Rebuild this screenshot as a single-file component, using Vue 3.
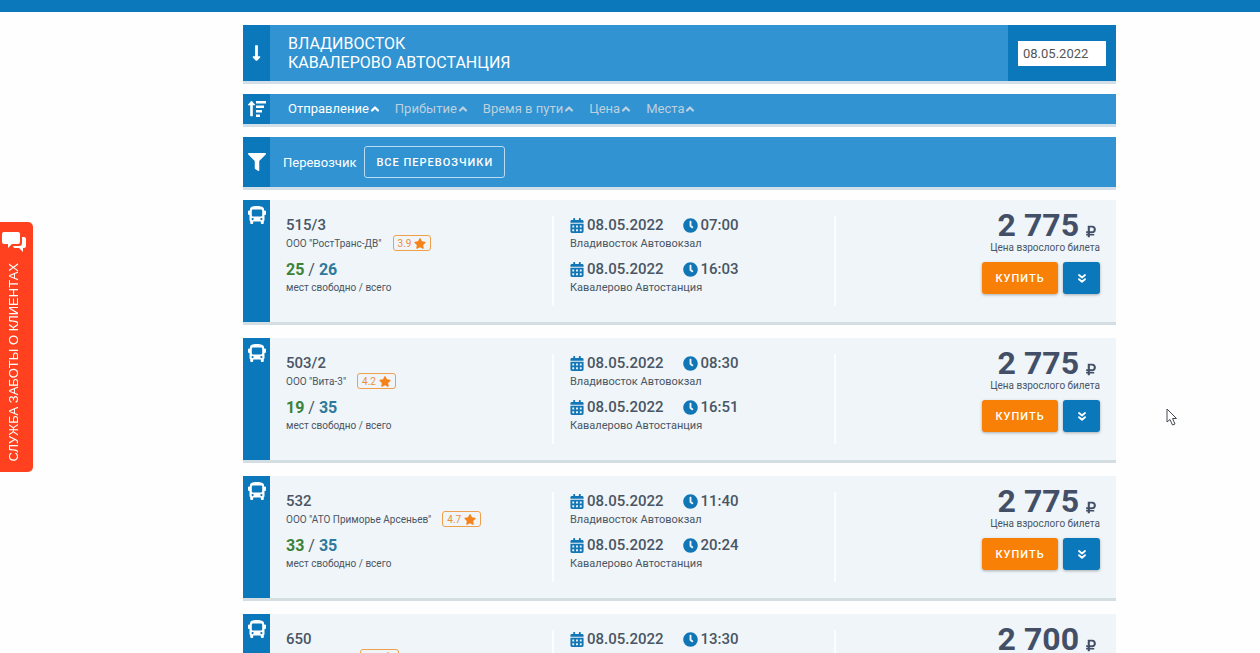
<script setup>
import { ref } from 'vue'

const date = ref('08.05.2022')
const sorts = ['Отправление', 'Прибытие', 'Время в пути', 'Цена', 'Места']
const active = ref('Отправление')

const trips = [
  { no: '515/3', company: 'ООО "РостТранс-ДВ"', rate: '3.9', free: 25, total: 26, dep: '07:00', arr: '16:03', price: '2 775' },
  { no: '503/2', company: 'ООО "Вита-3"', rate: '4.2', free: 19, total: 35, dep: '08:30', arr: '16:51', price: '2 775' },
  { no: '532', company: 'ООО "АТО Приморье Арсеньев"', rate: '4.7', free: 33, total: 35, dep: '11:40', arr: '20:24', price: '2 775' },
  { no: '650', company: 'ООО "Вокзал"', rate: '4.5', free: 30, total: 35, dep: '13:30', arr: '22:10', price: '2 700' },
]
const stops = (t) => [
  { time: t.dep, place: 'Владивосток Автовокзал' },
  { time: t.arr, place: 'Кавалерово Автостанция' },
]
</script>

<template>
  <div class="page">
    <svg class="defs" aria-hidden="true">
      <symbol id="i-cal" viewBox="0 0 448 512">
        <path d="M0 464c0 26.500 21.500 48 48 48h352c26.500 0 48-21.500 48-48V192H0v272zm320-208h64v64h-64zm0 128h64v64h-64zM192 256h64v64h-64zm0 128h64v64h-64zM64 256h64v64H64zm0 128h64v64H64zM400 64h-48V16c0-9-7-16-16-16h-32c-9 0-16 7-16 16v48H160V16c0-9-7-16-16-16h-32c-9 0-16 7-16 16v48H48C21 64 0 85 0 112v48h448v-48c0-27-21-48-48-48z" fill-rule="evenodd" />
      </symbol>
      <symbol id="i-clock" viewBox="0 0 512 512">
        <path d="M256,8C119,8,8,119,8,256S119,504,256,504,504,393,504,256,393,8,256,8Zm92.490,313h0l-20,25a16,16,0,0,1-22.490,2.500h0l-67-49.720a40,40,0,0,1-15-31.230V112a16,16,0,0,1,16-16h32a16,16,0,0,1,16,16V256l58,42.500A16,16,0,0,1,348.490,321Z" />
      </symbol>
      <symbol id="i-star" viewBox="0 0 576 512">
        <path d="M259.300 17.800L194 150.200 47.900 171.500c-26.200 3.800-36.700 36.100-17.700 54.600l105.700 103-25 145.500c-4.500 26.300 23.200 46 46.400 33.700L288 439.600l130.700 68.700c23.200 12.200 50.900-7.400 46.400-33.700l-25-145.500 105.700-103c19-18.500 8.500-50.800-17.700-54.600L382 150.200 316.700 17.800c-11.700-23.600-45.600-23.900-57.400 0z" />
      </symbol>
      <symbol id="i-rub" viewBox="0 0 384 512">
        <path fill-rule="evenodd" d="M239 320C324 320 384 260 384 175S324 32 239 32H76c-7 0-12 5-12 12v207H12c-7 0-12 5-12 12V308c0 7 5 12 12 12h52v32H12c-7 0-12 5-12 12v40c0 7 5 12 12 12h52v52c0 7 5 12 12 12h59c6 0 12-5 12-12v-52H308c7 0 12-5 12-12v-40c0-7-5-12-12-12H147v-32h92zM147 101h78c47 0 75 29 75 74 0 46-28 76-76 76h-77V101z" />
      </symbol>
      <symbol id="i-bus" viewBox="0 0 18 18">
        <path fill-rule="evenodd" d="M9 0C5 0 2 1 2 3V4.500H1Q0 4.500 0 5.500V8Q0 9 1 9H1.500V14Q1.500 14.800 2.200 15V17Q2.200 18 3.200 18H4.200Q5.200 18 5.200 17V15.500H12.800V17Q12.800 18 13.800 18H14.800Q15.800 18 15.800 17V15Q16.500 14.800 16.500 14V9H17Q18 9 18 8V5.500Q18 4.500 17 4.500H16V3C16 1 13 0 9 0ZM5 3.500H13Q14.200 3.500 14.200 4.700V9.300Q14.200 10.500 13 10.500H5Q3.800 10.500 3.800 9.300V4.700Q3.800 3.500 5 3.500ZM4.600 12A1.100 1.100 0 1 1 4.600 14.200A1.100 1.100 0 1 1 4.600 12ZM13.400 12A1.100 1.100 0 1 1 13.400 14.200A1.100 1.100 0 1 1 13.400 12Z" />
      </symbol>
      <symbol id="i-up" viewBox="0 0 10 8">
        <path d="M2 5.500L5 2.500L8 5.500" fill="none" stroke="currentColor" stroke-width="2.200" stroke-linecap="round" stroke-linejoin="round" />
      </symbol>
    </svg>

    <div class="topbar"></div>

    <aside class="care">
      <svg width="24" height="22" viewBox="0 0 24 22" aria-hidden="true">
        <path d="M2 1H16Q18 1 18 3V11Q18 13 16 13H10L6 17V13H2Q0 13 0 11V3Q0 1 2 1Z" />
        <path d="M20 6H22Q24 6 24 8V15Q24 17 22 17H21V21L17 17H13Q11 17 11 15H17Q20 15 20 12Z" />
      </svg>
      <a href="#">СЛУЖБА ЗАБОТЫ О КЛИЕНТАХ</a>
    </aside>

    <main class="content">
      <header class="bar route">
        <div class="tab">
          <svg width="9" height="18" viewBox="0 0 256 512" aria-hidden="true"><path d="M168 346V44c0-7-5-12-12-12h-56c-7 0-12 5-12 12v302H42c-21 0-32 26-17 41l86 86c9 9 25 9 34 0l86-86c15-15 4-41-17-41H168z" /></svg>
        </div>
        <h1>ВЛАДИВОСТОК<br />КАВАЛЕРОВО АВТОСТАНЦИЯ</h1>
        <div class="datebox"><input v-model="date" type="text" aria-label="Дата" /></div>
      </header>

      <nav class="bar sort">
        <div class="tab">
          <svg width="18" height="16" viewBox="0 0 18 16" aria-hidden="true">
            <path d="M3.500 0L7 4H4.500V15H2.500V4H0Z" stroke="#fff" stroke-linejoin="round" stroke-width=".6" />
            <path d="M8 0H18V2.500H8ZM8 4.500H16V7H8ZM8 9H14V11.500H8ZM8 13.500H12V16H8Z" />
          </svg>
        </div>
        <div class="sorts">
          <button v-for="s in sorts" :key="s" type="button" :class="{ active: s === active }" @click="active = s">
            {{ s }}<svg width="10" height="8" aria-hidden="true"><use href="#i-up" /></svg>
          </button>
        </div>
      </nav>

      <section class="bar filter">
        <div class="tab">
          <svg width="18" height="18" viewBox="0 0 512 512" aria-hidden="true"><path d="M488 0H24C3 0-8 26 7 41L192 226V432c0 8 4 15 10 20l80 56C298 519 320 507 320 488V226l185-185C520 26 509 0 488 0z" /></svg>
        </div>
        <span id="carrier">Перевозчик</span>
        <button type="button" class="all" aria-describedby="carrier">ВСЕ ПЕРЕВОЗЧИКИ</button>
      </section>

      <article v-for="t in trips" :key="t.no" class="card">
        <div class="tab">
          <svg width="18" height="18" aria-hidden="true"><use href="#i-bus" /></svg>
        </div>
        <div class="cols">
          <div class="col">
            <h2>{{ t.no }}</h2>
            <div class="company">
              {{ t.company }}
              <span class="rate">{{ t.rate }}<svg width="12" height="11" aria-hidden="true"><use href="#i-star" /></svg></span>
            </div>
            <div class="seats"><b class="free">{{ t.free }}</b> / <b class="total">{{ t.total }}</b></div>
            <div class="note">мест свободно / всего</div>
          </div>
          <div class="col">
            <div v-for="s in stops(t)" :key="s.place" class="stop">
              <div class="when">
                <svg width="14" height="15" aria-hidden="true"><use href="#i-cal" /></svg>
                <span class="day">{{ date }}</span>
                <svg width="15" height="15" aria-hidden="true"><use href="#i-clock" /></svg>
                <span>{{ s.time }}</span>
              </div>
              <div class="place">{{ s.place }}</div>
            </div>
          </div>
          <div class="col buy">
            <div class="price">{{ t.price }}<svg width="10" height="13" role="img" aria-label="₽"><use href="#i-rub" /></svg></div>
            <div class="hint">Цена взрослого билета</div>
            <div class="actions">
              <button type="button" class="order">КУПИТЬ</button>
              <button type="button" class="more" aria-label="Подробнее">
                <svg width="8" height="9" viewBox="0 0 8 9" aria-hidden="true"><path d="M1 1L4 3.500L7 1M1 5.200L4 7.700L7 5.200" fill="none" stroke="#fff" stroke-width="1.800" stroke-linecap="round" stroke-linejoin="round" /></svg>
              </button>
            </div>
          </div>
        </div>
      </article>
    </main>

    <svg class="pointer" width="12" height="18" viewBox="0 0 12 18" aria-hidden="true">
      <path d="M1 1V14L4 11.500L6.500 17L9 16L6.500 10.500H10.500Z" fill="#fff" stroke="#444a55" />
    </svg>
  </div>
</template>

<style>
body {
  overflow-x: hidden;
  background: #fefefe;
}
</style>

<style scoped>
.page {
  font-family: Roboto, "Liberation Sans", sans-serif;
  color: #4a5565;
  min-height: 100vh;
}
* { box-sizing: border-box; }
button, input { font-family: inherit; margin: 0; }
svg { display: block; fill: currentColor; flex: none; }
.defs { position: absolute; width: 0; height: 0; }
.topbar { height: 12px; background: #0b78bb; }
.content { padding: 13px 144px 0 243px; }

.care {
  position: fixed;
  left: 0;
  top: 222px;
  width: 33px;
  height: 250px;
  padding: 9px 0 11px 2px;
  background: #ff411f;
  border-radius: 0 5px 5px 0;
  color: #fff;
  display: flex;
  flex-direction: column;
  justify-content: space-between;
}
.care a {
  writing-mode: vertical-rl;
  transform: rotate(180deg);
  color: #fff;
  text-decoration: none;
  font: 13px/24px "Liberation Sans", Arial, sans-serif;
  white-space: nowrap;
}

.bar {
  display: flex;
  align-items: center;
  background: #3193d1;
  border-bottom: 3px solid #d3dfe8;
  margin-bottom: 10px;
  color: #fff;
}
.tab {
  flex: none;
  width: 27px;
  align-self: stretch;
  display: flex;
  align-items: center;
  justify-content: center;
  background: #0b78bb;
  color: #fff;
}
.route { height: 59px; }
.route h1 {
  flex: 1;
  margin: 0 0 0 18px;
  font-size: 16px;
  line-height: 19px;
  font-weight: 400;
}
.datebox {
  align-self: stretch;
  display: flex;
  align-items: center;
  padding: 0 10px;
  background: #0b78bb;
}
.datebox input {
  width: 88px;
  height: 25px;
  border: 0;
  padding: 0 5px;
  font-size: 13px;
  color: #555;
  background: #fff;
}
.sort { height: 33px; }
.sorts { display: flex; gap: 15px; padding-left: 18px; }
.sorts button {
  display: flex;
  align-items: center;
  gap: 1px;
  padding: 0;
  border: 0;
  background: none;
  font-size: 13px;
  line-height: 20px;
  color: #bcd0df;
}
.sorts .active { color: #fff; }
.filter { height: 53px; font-size: 13px; padding-right: 16px; }
.filter span { margin: 0 8px 0 13px; }
.all {
  height: 32px;
  padding: 0 11px;
  border: 1px solid #b9dcf2;
  border-radius: 3px;
  background: none;
  color: #fff;
  font-size: 11px;
  font-weight: 500;
  letter-spacing: 1px;
}

.card {
  display: flex;
  min-height: 125px;
  margin-bottom: 13px;
  background: #eff5f8;
  border-bottom: 3px solid #d3dde2;
}
.card .tab { align-items: flex-start; padding-top: 6px; }
.cols {
  flex: 1;
  display: grid;
  grid-template-columns: repeat(3, 1fr);
  padding: 16px 0;
}
.col { padding-left: 16px; }
.col + .col { border-left: 2px solid #fcfdfe; }
h2 { margin: 0; font-size: 15px; line-height: 19px; font-weight: 500; }
.company {
  display: flex;
  align-items: center;
  gap: 11px;
  height: 16px;
  font-size: 10px;
}
.rate {
  display: flex;
  align-items: center;
  gap: 3px;
  height: 16px;
  padding: 0 4px;
  border: 1px solid #f0a04c;
  border-radius: 3px;
  font-size: 10px;
  color: #ec8d3c;
}
.rate svg { color: #f5821a; }
.seats { margin-top: 9px; font-size: 16px; line-height: 19px; }
.seats b { font-weight: 700; }
.free { color: #3d8239; }
.total { color: #2d7a9c; }
.note { font-size: 10px; line-height: 17px; }
.place { font-size: 11px; line-height: 17px; }
.stop { margin-bottom: 8px; }
.when {
  display: flex;
  align-items: center;
  gap: 3px;
  font-size: 15px;
  line-height: 19px;
  font-weight: 500;
}
.when svg { color: #1176b6; }
.day { margin-right: 16px; }
.buy {
  display: flex;
  flex-direction: column;
  align-items: flex-end;
  padding-right: 16px;
}
.price {
  display: flex;
  align-items: flex-end;
  gap: 7px;
  padding-right: 4px;
  margin-top: -8px;
  font-size: 32px;
  line-height: 34px;
  font-weight: 700;
  color: #434f67;
}
.price svg { margin-bottom: 4px; }
.hint { font-size: 10px; line-height: 12px; }
.actions { display: flex; gap: 5px; margin-top: 8px; }
.actions button {
  height: 32px;
  padding: 0;
  border: 0;
  border-radius: 3px;
  box-shadow: 0 1px 3px #0000004d;
  color: #fff;
}
.actions .order {
  width: 76px;
  background: #f98006;
  font-size: 11px;
  font-weight: 500;
  letter-spacing: 1px;
}
.actions .more {
  width: 37px;
  background: #0b78bb;
  display: flex;
  align-items: center;
  justify-content: center;
}
.pointer { position: absolute; left: 1166px; top: 408px; }
</style>
